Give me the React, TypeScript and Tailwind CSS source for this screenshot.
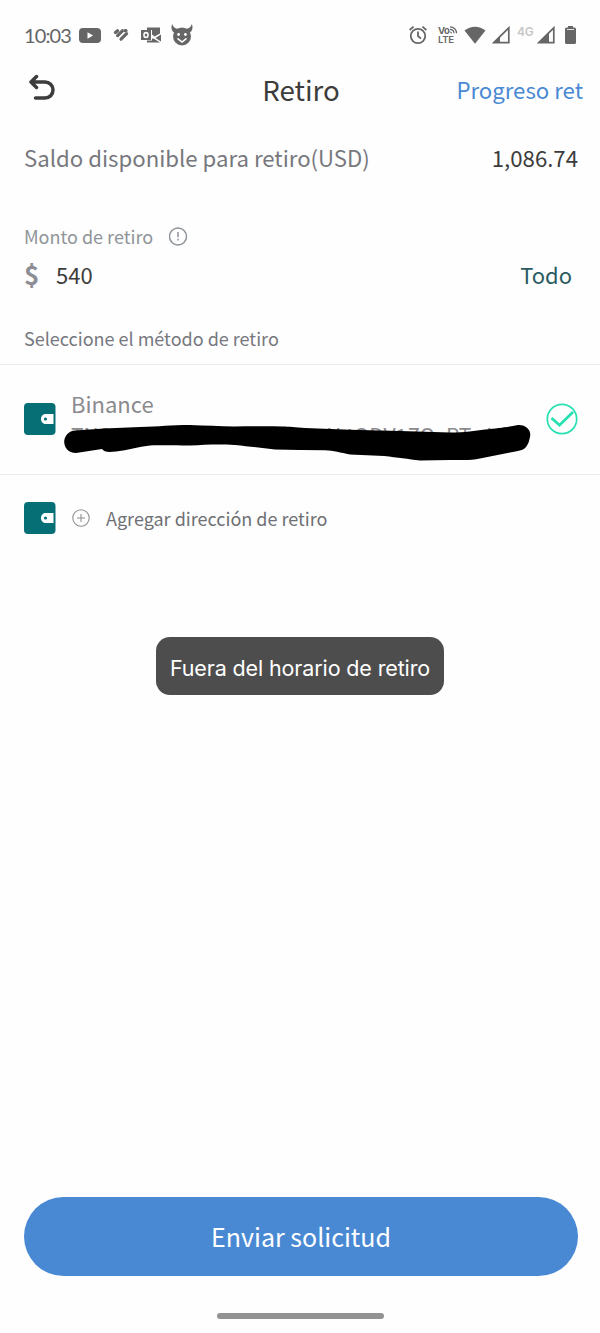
import React from 'react';

function StatusBar() {
  return (
    <div className="flex h-[70px] items-center pl-[24px] pr-[24px] text-[#666666]">
      <span className="w-[55px] whitespace-nowrap font-['Lato'] text-[20px] leading-[24px] tracking-[-0.9px]">10:03</span>

      {/* YouTube */}
      <svg className="h-[15px] w-[22px]" viewBox="0 0 22 15" fill="currentColor">
        <rect width="22" height="15" rx="4" />
        <path d="M8.5 4.3v6.4l5.6-3.2z" fill="#fff" />
      </svg>

      {/* Striped heart */}
      <svg className="ml-[12px] h-[14px] w-[16px]" viewBox="0 0 16 14" fill="none" stroke="currentColor" strokeWidth="3.2" strokeLinecap="round">
        <path d="M2.4 4.6 4.6 2.8M4.6 7.600 9.400 2.800M8 11.200l5.600-5.600" />
        <path d="M12 2.700h1" />
      </svg>

      {/* Outlook */}
      <svg className="ml-[12px] h-[18px] w-[21px]" viewBox="0 0 21 18" fill="currentColor">
        <path d="M6 1.500h13v6L13.500 10.500 11 8.500V4H6z" />
        <path d="M20 8.500v7L14.500 12zM11 12.500l2 .2 6 3.800H6v-2h5z" />
        <path d="M0 4h10v10H0zM5 5.700A2.800 3.300 0 1 0 5 12.300 2.800 3.300 0 1 0 5 5.700zM5 7.400A1.300 1.600 0 1 1 5 10.600 1.300 1.600 0 1 1 5 7.400z" fillRule="evenodd" />
      </svg>

      {/* Devil face */}
      <svg className="ml-[8px] h-[22px] w-[24px]" viewBox="0 0 24 22" fill="currentColor">
        <circle cx="12" cy="12.5" r="9" />
        <path d="M2.200 0C.6 4 1.800 7.400 4.800 8.800l3.600-4C5 4.800 3 3.200 2.200 0zM21.800 0c1.600 4 .4 7.400-2.600 8.800l-3.600-4c3.400 0 5.400-1.600 6.200-4.800z" />
        <circle cx="8.600" cy="10.500" r="1.400" fill="#fff" />
        <circle cx="15.400" cy="10.500" r="1.400" fill="#fff" />
        <path d="M8 14.800 12 18l4-3.200" fill="none" stroke="#fff" strokeWidth="1.500" strokeLinecap="round" />
      </svg>

      <div className="ml-auto flex items-center">
        {/* Alarm */}
        <svg className="h-[20px] w-[20px]" viewBox="0 0 20 20" fill="none" stroke="currentColor" strokeWidth="1.800">
          <circle cx="10" cy="11" r="7.200" />
          <path d="M10 6.500V11l3 2.600M1.600 5 5.600 1.600M18.400 5l-4-3.400" />
        </svg>
        <div className="relative ml-[10px] h-[20px] w-[21px] pt-[1px] font-['Inter'] text-[9.500px] font-bold leading-[9px]">
          <div className="tracking-[-0.5px]">Vo</div>
          <div className="font-semibold tracking-[-0.3px]">LTE</div>
          <svg className="absolute left-[12px] top-[1px] h-[8px] w-[8px]" viewBox="0 0 8 8" fill="none" stroke="currentColor" strokeWidth="1.200">
            <path d="M0 .8c4 0 6.500 3 6.500 6.500M0 3.400c2.500 0 4 1.600 4 3.900M0 6c1 0 1.500.5 1.500 1.300" />
          </svg>
        </div>
        <svg className="ml-[5px] h-[18px] w-[22px]" viewBox="0 0 22 18" fill="currentColor">
          <path d="M.5 4.500C6.500-.6 15.500-.6 21.500 4.500L11 17.700z" />
        </svg>
        <svg className="ml-[6px] h-[18px] w-[18px]" viewBox="0 0 18 18">
          <path d="M1.800 16.600 16.800 1.800v14.800z" fill="none" stroke="currentColor" strokeWidth="1.700" />
          <path d="M1 17 8 10.500V17z" fill="currentColor" />
        </svg>
        <span className="mb-[7px] ml-[7px] w-[17px] font-['Inter'] text-[12px] font-semibold leading-[12px] tracking-[-0.2px] text-[#c6c6c6]">4G</span>
        <svg className="ml-[3px] h-[18px] w-[18px]" viewBox="0 0 18 18">
          <path d="M1.800 16.600 16.800 1.800v14.800z" fill="none" stroke="currentColor" strokeWidth="1.700" />
          <path d="M1 17 12 6.500V17z" fill="currentColor" />
        </svg>
        <svg className="ml-[10px] h-[18px] w-[11px]" viewBox="0 0 11 18" fill="currentColor">
          <path d="M3 0h5v1.500h1.500A1.500 1.500 0 0 1 11 3v13.500A1.500 1.500 0 0 1 9.500 18h-8A1.500 1.500 0 0 1 0 16.500V3A1.500 1.500 0 0 1 1.500 1.500H3z" />
          <path d="M2 3.500h7" stroke="#fff" strokeWidth=".8" />
        </svg>
      </div>
    </div>
  );
}

function WalletIcon() {
  return (
    <svg className="h-[32px] w-[32px] shrink-0" viewBox="0 0 32 32">
      <rect width="31.500" height="32" rx="4" fill="#066f76" />
      <path d="M21.500 11h8v10h-8c-2.500 0-4.500-2.200-4.500-5s2-5 4.500-5z" fill="#fff" />
      <circle cx="21.500" cy="16" r="1.600" fill="#066f76" />
    </svg>
  );
}

// Hand-drawn marker stroke hiding the wallet address
function Scribble() {
  return (
    <svg className="absolute left-[60px] top-[55px] h-[46px] w-[480px]" viewBox="60 420 480 46">
      <path d="M76 453C68 453 64 447 64.200 441 65 435 69 431 75 430.500L104 428.500 140 427C160 426.500 170 425 190 425 205 425.500 220 426 234 426.500 250 426.500 265 426 282 426.500 290 426.500 295 427.500 305 428L350 429.700 400 431 450 432.500C465 432.500 475 431 485 429.500 500 428 508 427 518 425 526 424.500 531 430 530.200 436 529 441 529 443 526 447 523 450.500 518 451 510 452.500L480 458.500C472 460.500 465 460 450 460L420 460.500C408 459 398 457.500 384 456L350 454.500C340 452.500 334 450.500 325 450.200L300 450 275 449.500C262 448 250 446.500 235 445 215 444 205 445 190 445.500 175 445.500 165 445 150 445.500 138 447 128 450 116 451.500 108 452.500 104 452 102 449z" />
    </svg>
  );
}

export default function App() {
  return (
    <div className="flex h-[1333px] w-[600px] flex-col overflow-hidden bg-[#fefefe] font-['Noto_Sans_CJK_SC',sans-serif]">
      <StatusBar />

      <header className="grid h-[38px] grid-cols-[1fr_auto_1fr] items-center pl-[29px] pr-[27px]">
        <svg className="mt-[-3px] h-[27px] w-[27px]" viewBox="0 0 27 27" fill="none" stroke="#3c3c3c" strokeWidth="3.500" strokeLinecap="round" strokeLinejoin="round">
          <path d="M7.500 2.500 2 8l5.500 5.500M2.500 8h13.500a8 8 0 0 1 0 16H6.500" />
        </svg>
        <h1 className="mt-[-1px] text-[27.700px] leading-[38px] text-[#3c3c3c]">Retiro</h1>
        <span className="mr-[-10px] mt-[-1px] justify-self-end text-[22.200px] leading-[38px] text-[#4a89d3]">Progreso ret</span>
      </header>

      <div className="mt-[33px] flex h-[32px] items-center justify-between pl-[24px] pr-[22px] text-[22.200px] leading-[32px]">
        <span className="text-[#77787d]">Saldo disponible para retiro(USD)</span>
        <span className="text-[#3c3c3c]">1,086.74</span>
      </div>

      <div className="mt-[50px] flex h-[26px] items-center pl-[24px] text-[18px] leading-[26px] text-[#8f9499]">
        <span>Monto de retiro</span>
        <svg className="ml-[16px] mt-[1px] h-[19px] w-[19px]" viewBox="0 0 19 19" fill="none" stroke="currentColor" strokeWidth="1.500">
          <circle cx="9" cy="9.500" r="8.500" />
          <path d="M9 5v5.200M9 11.700v1.800" />
        </svg>
      </div>

      <div className="mt-[8px] flex h-[34px] items-center pl-[24px] pr-[28px] text-[22px] leading-[34px]">
        <span className="w-[32px] text-[26px] font-bold text-[#8d8e95]">$</span>
        <span className="text-[#3c3c3c]">540</span>
        <span className="ml-auto text-[#2a5b62]">Todo</span>
      </div>

      <div className="mt-[34px] h-[40px] pl-[24px] text-[18px] leading-[26px] text-[#77787f]">Seleccione el método de retiro</div>

      <div className="relative mt-[-1px] h-[111px] border-y border-[#ebebeb] pl-[24px] pr-[22px]">
        <div className="flex h-[108px] items-center">
          <WalletIcon />
          <div className="ml-[15px] flex-1 self-start pt-[22px] text-[#8a8a8e]">
            <div className="text-[22px] leading-[32px]">Binance</div>
            <div className="mt-[1px] flex whitespace-nowrap text-[21px] leading-[30px]">
              <span className="w-[255px]">TNS</span>
              <span className="w-[16px]">N</span>
              <span className="w-[104px]">4QDV1ZQ</span>
              <span className="w-[40px]">PT</span>
              <span>Ni</span>
            </div>
          </div>
          <svg className="h-[32px] w-[32px] shrink-0" viewBox="0 0 32 32" fill="none" stroke="#25e0b0">
            <circle cx="16" cy="16" r="14.700" strokeWidth="1.700" />
            <path d="M5.500 15 13.500 22.200 27 9" strokeWidth="2.800" />
          </svg>
        </div>
        <Scribble />
      </div>

      <div className="flex h-[86px] items-center pl-[24px] text-[18px] leading-[26px] text-[#6f7074]">
        <WalletIcon />
        <svg className="ml-[16px] h-[18px] w-[18px]" viewBox="0 0 18 18" fill="none" stroke="#909090" strokeWidth="1.100">
          <circle cx="9" cy="9" r="8.200" />
          <path d="M9 5v8M5 9h8" />
        </svg>
        <span className="ml-[16px]">Agregar dirección de retiro</span>
      </div>

      <div className="mt-[76px] flex h-[58px] w-[288px] items-center justify-center self-center rounded-[14px] bg-[#4d4d4d] pt-[3px]">
        <span className="whitespace-nowrap font-['Inter'] text-[21.500px] leading-[30px] tracking-[-0.130px] text-white">Fuera del horario de retiro</span>
      </div>

      <button className="ml-[24px] mr-[22px] mt-auto h-[79px] rounded-full bg-[#4989d3] pb-[2px] text-[25px] leading-[36px] text-white">
        Enviar solicitud
      </button>
      <div className="mb-[14px] mt-[37px] h-[6px] w-[167px] self-center rounded-full bg-[#929292]" />
    </div>
  );
}
